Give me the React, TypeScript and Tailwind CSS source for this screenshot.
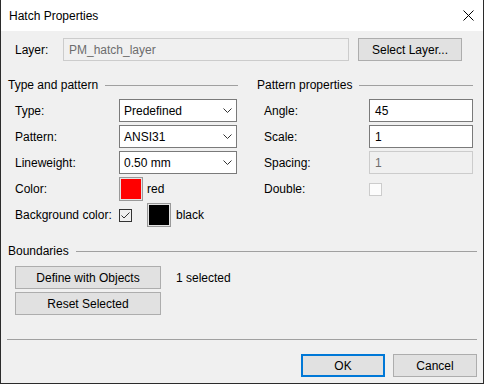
import React from 'react';

function Chevron() {
  return (
    <svg width="9" height="5" viewBox="0 0 9 5" className="shrink-0">
      <path d="M0.5 0.5 L4.5 4.5 L8.5 0.5" fill="none" stroke="#333" strokeWidth="1" />
    </svg>
  );
}

function Select({ value }: { value: string }) {
  return (
    <div className="w-[118px] h-[23px] border border-[#7a7a7a] bg-white flex items-center justify-between pl-[4px] pr-[4px]">
      <span>{value}</span>
      <Chevron />
    </div>
  );
}

function TextBox({ value, disabled }: { value: string; disabled?: boolean }) {
  return (
    <div
      className={
        disabled
          ? 'w-[104px] h-[23px] border border-[#cccccc] bg-[#f0f0f0] text-[#6d6d6d] flex items-center pl-[5px]'
          : 'w-[104px] h-[23px] border border-[#7a7a7a] bg-white flex items-center pl-[5px]'
      }
    >
      {value}
    </div>
  );
}

function Swatch({ color }: { color: string }) {
  return (
    <div className="w-[24px] h-[24px] border border-[#999999] bg-[#e3e3e3] p-[1px] shrink-0">
      <div className="w-full h-full" style={{ backgroundColor: color }} />
    </div>
  );
}

function Button({ label, className }: { label: string; className: string }) {
  return (
    <div className={'h-[23px] bg-[#e1e1e1] border border-[#adadad] flex items-center justify-center ' + className}>
      {label}
    </div>
  );
}

function GroupHeader({ title }: { title: string }) {
  return (
    <div className="h-[14px] flex items-center">
      <span>{title}</span>
      <div className="flex-1 h-px bg-[#a0a0a0] ml-[7px]" />
    </div>
  );
}

function Row({ label, children, tall, labelWidth }: { label: string; children: React.ReactNode; tall?: boolean; labelWidth: string }) {
  return (
    <div className={(tall ? 'h-[24px]' : 'h-[23px]') + ' flex items-center pl-[7px]'}>
      <span className={labelWidth + ' shrink-0'}>{label}</span>
      {children}
    </div>
  );
}

export default function App() {
  return (
    <div className="w-[484px] h-[384px] bg-[#f0f0f0] border-x border-b border-[#2b2b2b] flex flex-col font-['Liberation_Sans',Arial,sans-serif] text-[12px] leading-none text-black">
      <div className="h-[31px] bg-white flex items-center justify-between pl-[8px] pr-[9px] shrink-0">
        <span>Hatch Properties</span>
        <svg width="11" height="11" viewBox="0 0 11 11">
          <path d="M0.5 0.5 L10.5 10.5 M10.5 0.5 L0.5 10.5" stroke="#000" strokeWidth="1" />
        </svg>
      </div>

      <div className="mt-[7px] h-[23px] flex items-center pl-[14px]">
        <span className="w-[48px]">Layer:</span>
        <div className="w-[286px] h-[23px] border border-[#cccccc] bg-[#f0f0f0] text-[#6d6d6d] flex items-center pl-[5px]">
          PM_hatch_layer
        </div>
        <Button label="Select Layer..." className="ml-[9px] w-[104px]" />
      </div>

      <div className="mt-[17px] flex">
        <div className="ml-[7px] w-[230px] flex flex-col">
          <GroupHeader title="Type and pattern" />
          <div className="mt-[7px] flex flex-col">
            <Row label="Type:" labelWidth="w-[104px]">
              <Select value="Predefined" />
            </Row>
            <div className="mt-[3px]">
              <Row label="Pattern:" labelWidth="w-[104px]">
                <Select value="ANSI31" />
              </Row>
            </div>
            <div className="mt-[3px]">
              <Row label="Lineweight:" labelWidth="w-[104px]">
                <Select value="0.50 mm" />
              </Row>
            </div>
            <div className="mt-[3px]">
              <Row label="Color:" tall labelWidth="w-[104px]">
                <Swatch color="#ff0000" />
                <span className="ml-[4px]">red</span>
              </Row>
            </div>
            <div className="mt-[2px]">
              <Row label="Background color:" tall labelWidth="w-[104px]">
                <div className="w-[13px] h-[13px] border border-[#333333] bg-[#f0f0f0] flex items-center justify-center">
                  <svg width="9" height="7" viewBox="0 0 9 7">
                    <path d="M0.5 3.5 L3 6 L8.5 0.5" fill="none" stroke="#333" strokeWidth="1" />
                  </svg>
                </div>
                <div className="ml-[15px]">
                  <Swatch color="#000000" />
                </div>
                <span className="ml-[5px]">black</span>
              </Row>
            </div>
          </div>
        </div>

        <div className="ml-[19px] w-[216px] flex flex-col">
          <GroupHeader title="Pattern properties" />
          <div className="mt-[7px] flex flex-col">
            <Row label="Angle:" labelWidth="w-[105px]">
              <TextBox value="45" />
            </Row>
            <div className="mt-[3px]">
              <Row label="Scale:" labelWidth="w-[105px]">
                <TextBox value="1" />
              </Row>
            </div>
            <div className="mt-[3px]">
              <Row label="Spacing:" labelWidth="w-[105px]">
                <TextBox value="1" disabled />
              </Row>
            </div>
            <div className="mt-[3px]">
              <Row label="Double:" tall labelWidth="w-[105px]">
                <div className="w-[13px] h-[13px] border border-[#cccccc] bg-[#fcfcfc]" />
              </Row>
            </div>
          </div>
        </div>
      </div>

      <div className="mt-[17px] ml-[7px] w-[469px]">
        <GroupHeader title="Boundaries" />
      </div>
      <div className="mt-[8px] ml-[14px] flex flex-col gap-[3px]">
        <div className="flex items-center">
          <Button label="Define with Objects" className="w-[146px]" />
          <span className="ml-[15px]">1 selected</span>
        </div>
        <Button label="Reset Selected" className="w-[146px]" />
      </div>

      <div className="mt-[24px] ml-[6px] w-[470px] h-px bg-[#a0a0a0]" />

      <div className="mt-[14px] flex justify-end gap-[8px] pr-[6px]">
        <div className="w-[84px] h-[23px] bg-[#e1e1e1] border-2 border-[#0078d7] flex items-center justify-center">OK</div>
        <Button label="Cancel" className="w-[84px]" />
      </div>
    </div>
  );
}
